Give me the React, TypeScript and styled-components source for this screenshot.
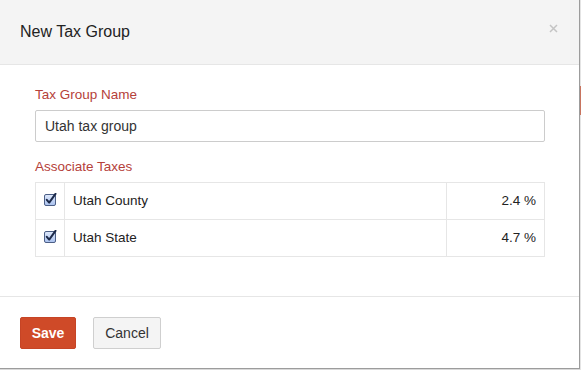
import React from "react";
import styled, { createGlobalStyle } from "styled-components";

const Global = createGlobalStyle`
  html, body { margin: 0; padding: 0; background: #d9d9d9; }
  body { font-family: "Liberation Sans", Arial, Helvetica, sans-serif; color: #333; }
  * { box-sizing: border-box; }
`;

const Page = styled.div`
  display: flex;
  width: 581px;
  height: 370px;
  overflow: hidden;
`;

const Modal = styled.div`
  width: 580px;
  height: 369px;
  background: #fff;
  border-right: 1px solid #9c9c9c;
  border-bottom: 1px solid #9c9c9c;
  display: flex;
  flex-direction: column;
  flex-shrink: 0;
`;

const Backdrop = styled.div`
  flex: 1;
  display: flex;
  flex-direction: column;
  background: #e4e4e4;
`;

const BackdropAccent = styled.div`
  margin-top: 86px;
  height: 29px;
  background: #c8745f;
`;

const Header = styled.div`
  height: 65px;
  background: #f4f4f4;
  border-bottom: 1px solid #e6e6e6;
  display: flex;
  align-items: center;
  justify-content: space-between;
  padding: 0 21px 1px 20px;
`;

const Title = styled.h3`
  margin: 0;
  font-size: 16px;
  font-weight: normal;
  color: #222;
`;

const Close = styled.button`
  border: 0;
  background: transparent;
  padding: 0;
  width: 10px;
  height: 10px;
  display: flex;
  align-items: center;
  justify-content: center;
  margin-top: -6px;
`;

const Body = styled.div`
  flex: 1;
  padding: 20px 35px 0 35px;
  border-bottom: 1px solid #e6e6e6;
  display: flex;
  flex-direction: column;
`;

const Label = styled.label<{ $gap?: number }>`
  display: block;
  font-size: 13.5px;
  line-height: 20px;
  color: #b5413a;
  margin-top: ${(p) => p.$gap ?? 0}px;
  margin-bottom: 5px;
`;

const Input = styled.input`
  width: 510px;
  height: 32px;
  border: 1px solid #cccccc;
  border-radius: 2px;
  padding: 0 9px;
  font-family: inherit;
  font-size: 14px;
  color: #333;
  outline: none;
  background: #fff;
`;

const Table = styled.table`
  width: 510px;
  border-collapse: collapse;
  font-size: 13.5px;
`;

const Cell = styled.td<{ $kind?: "check" | "name" | "rate" }>`
  border: 1px solid #e6e6e6;
  height: 37px;
  padding: 0 ${(p) => (p.$kind === "check" ? "0" : "8px")};
  width: ${(p) => (p.$kind === "check" ? "29px" : p.$kind === "rate" ? "98px" : "auto")};
  text-align: ${(p) => (p.$kind === "rate" ? "right" : p.$kind === "check" ? "center" : "left")};
  color: #222;
  vertical-align: middle;
  padding-bottom: 1px;
`;

const CheckWrap = styled.span`
  display: inline-flex;
  padding-top: 1px;
`;

const Footer = styled.div`
  height: 71px;
  display: flex;
  align-items: flex-start;
  gap: 17px;
  padding: 20px 20px 0 20px;
`;

const Button = styled.button<{ $primary?: boolean }>`
  height: 32px;
  width: ${(p) => (p.$primary ? "56px" : "68px")};
  padding: 0;
  border-radius: 2px;
  font-family: inherit;
  font-size: 14px;
  font-weight: ${(p) => (p.$primary ? "bold" : "normal")};
  color: ${(p) => (p.$primary ? "#fff" : "#333")};
  background: ${(p) => (p.$primary ? "#cf4a28" : "#f4f4f4")};
  border: 1px solid ${(p) => (p.$primary ? "#c64425" : "#cfcfcf")};
`;

const Checkbox = () => (
  <svg width="13" height="13" viewBox="0 0 13 13">
    <defs>
      <linearGradient id="cbg" x1="0" y1="0" x2="0" y2="1">
        <stop offset="0" stopColor="#dfe9fb" />
        <stop offset="1" stopColor="#a9c1ee" />
      </linearGradient>
    </defs>
    <rect x="0.5" y="1.5" width="11" height="11" rx="1.5" fill="url(#cbg)" stroke="#4c5f86" />
    <path d="M2.8 6.8 L5.2 9.6 L11.5 0.8" fill="none" stroke="#1c2a4a" strokeWidth="2" strokeLinecap="round" strokeLinejoin="round" />
  </svg>
);

const CloseIcon = () => (
  <svg width="9" height="9" viewBox="0 0 9 9">
    <path d="M1 1 L8 8 M8 1 L1 8" stroke="#c4c4c4" strokeWidth="1.5" />
  </svg>
);

const taxes = [
  { name: "Utah County", rate: "2.4 %" },
  { name: "Utah State", rate: "4.7 %" },
];

export default function App() {
  return (
    <>
      <Global />
      <Page>
        <Modal>
          <Header>
            <Title>New Tax Group</Title>
            <Close aria-label="Close">
              <CloseIcon />
            </Close>
          </Header>
          <Body>
            <Label>Tax Group Name</Label>
            <Input defaultValue="Utah tax group" />
            <Label $gap={15}>Associate Taxes</Label>
            <Table>
              <tbody>
                {taxes.map((t) => (
                  <tr key={t.name}>
                    <Cell $kind="check">
                      <CheckWrap>
                        <Checkbox />
                      </CheckWrap>
                    </Cell>
                    <Cell $kind="name">{t.name}</Cell>
                    <Cell $kind="rate">{t.rate}</Cell>
                  </tr>
                ))}
              </tbody>
            </Table>
          </Body>
          <Footer>
            <Button $primary>Save</Button>
            <Button>Cancel</Button>
          </Footer>
        </Modal>
        <Backdrop>
          <BackdropAccent />
        </Backdrop>
      </Page>
    </>
  );
}
